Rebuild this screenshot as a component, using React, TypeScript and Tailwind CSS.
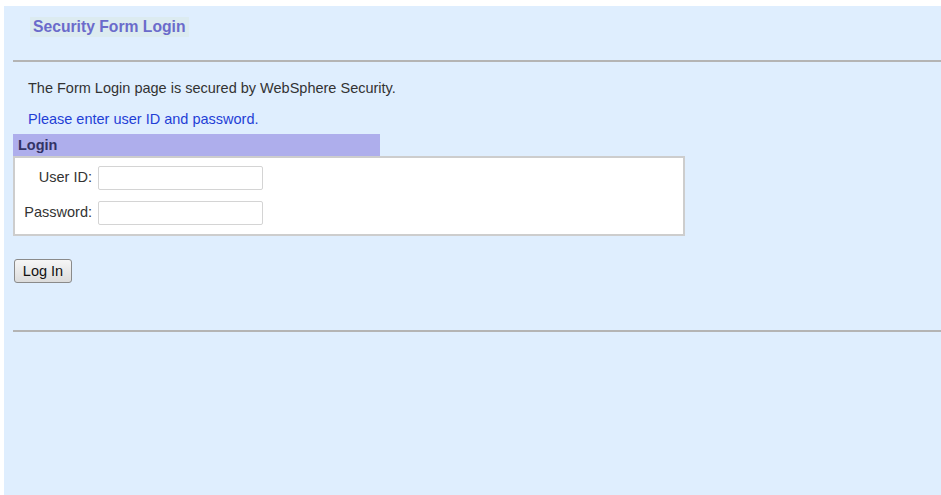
import React from 'react';

const LoginPage = () => {
  return (
    <div className="bg-white pt-[6px] pl-[4px] h-[495px] font-['Liberation_Sans',Arial,sans-serif]">
      <div className="bg-[#dfeefe] h-full pt-[11px] pl-[9px]">
        {/* page title */}
        <div className="flex pl-[17px]">
          <span className="bg-[#dcebf0] px-[3px] h-[20px] leading-[20px] text-[15.7px] font-bold text-[#6b6bcb]">
            Security Form Login
          </span>
        </div>

        <hr className="mt-[23px] border-0 h-[2px] bg-[#b4b4b4]" />

        <p className="mt-[18px] pl-[15px] text-[14.5px] text-[#333333] leading-[16px]">
          The Form Login page is secured by WebSphere Security.
        </p>
        <p className="mt-[15px] pl-[15px] text-[14.5px] text-[#1f3fd6] leading-[16px]">
          Please enter user ID and password.
        </p>

        {/* login box */}
        <div className="mt-[7px] w-[367px] h-[22px] bg-[#aeaeec] pl-[5px] text-[14.5px] font-bold text-[#333366] leading-[22px]">
          Login
        </div>
        <div className="w-[672px] h-[80px] bg-white border-2 border-[#cdcdcd] pt-[8px]">
          <div className="flex items-center h-[24px]">
            <label className="w-[83px] pr-[6px] text-right text-[14.5px] text-[#333333]">User ID:</label>
            <input className="w-[165px] h-[24px] border border-[#d4d4d4] rounded-[2px] bg-white" />
          </div>
          <div className="flex items-center h-[24px] mt-[11px]">
            <label className="w-[83px] pr-[6px] text-right text-[14.5px] text-[#333333] whitespace-nowrap">Password:</label>
            <input type="password" className="w-[165px] h-[24px] border border-[#d4d4d4] rounded-[2px] bg-white" />
          </div>
        </div>

        <button className="mt-[23px] ml-[1px] w-[58px] h-[24px] rounded-[3px] border border-[#8a8a8a] bg-gradient-to-b from-[#f6f6f6] to-[#dcdcdc] text-[14.5px] text-[#111111] leading-[20px]">
          Log In
        </button>

        <hr className="mt-[47px] border-0 h-[2px] bg-[#b4b4b4]" />
      </div>
    </div>
  );
};

export default LoginPage;
